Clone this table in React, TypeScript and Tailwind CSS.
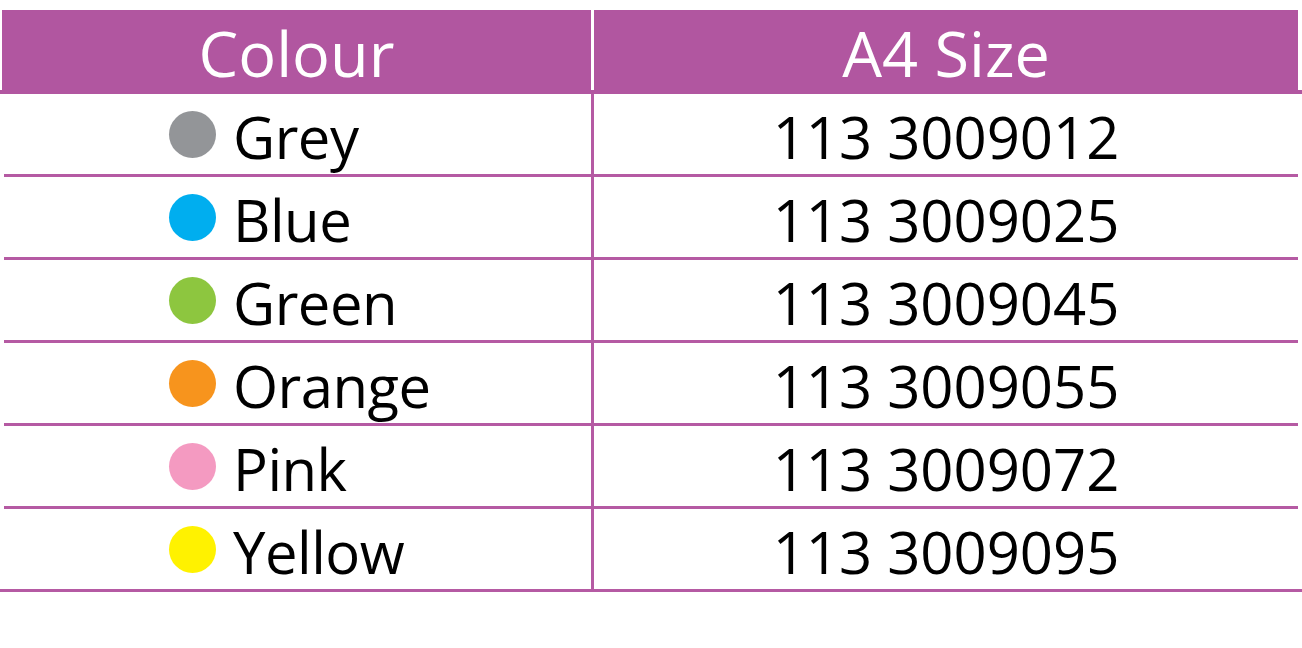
const rows = [
  { name: "Grey", dot: "bg-[#939598]", code: "113 3009012" },
  { name: "Blue", dot: "bg-[#00aeef]", code: "113 3009025" },
  { name: "Green", dot: "bg-[#8dc63f]", code: "113 3009045" },
  { name: "Orange", dot: "bg-[#f7941d]", code: "113 3009055" },
  { name: "Pink", dot: "bg-[#f49ac1]", code: "113 3009072" },
  { name: "Yellow", dot: "bg-[#fff200]", code: "113 3009095" },
];

const App = () => {
  return (
    <div
      className="w-[1302px] h-[648px] bg-white pt-[10px]"
      style={{ fontFamily: '"Open Sans", "Noto Sans", sans-serif' }}
    >
      {/* header */}
      <div className="flex ml-[2px] mr-[4px] h-[80px] text-white text-[63px] leading-none">
        <div className="w-[589px] bg-[#b156a0] flex items-center justify-center pt-[4px]">
          Colour
        </div>
        <div className="w-[3px] bg-white" />
        <div className="flex-1 bg-[#b156a0] flex items-center justify-center pt-[4px]">
          A4 Size
        </div>
      </div>
      <div className="h-[4px] bg-[#b156a0]" />

      {/* rows */}
      {rows.map((r, i) => {
        const last = i === rows.length - 1;
        return (
          <div key={r.name}>
            <div
              className={`flex mx-[4px] ${
                last ? "h-[80px]" : "h-[83px] border-b-[3px] border-[#b55aa3]"
              }`}
            >
              <div className="w-[587px] flex items-center gap-[17px] pl-[165px]">
                <span className={`w-[47px] h-[47px] rounded-full ${r.dot}`} />
                <span className="text-[58px] leading-none text-black tracking-[-0.5px] pt-[6px]">
                  {r.name}
                </span>
              </div>
              <div className="w-[3px] bg-[#b55aa3]" />
              <div className="flex-1 flex items-center justify-center text-[58px] leading-none text-black pt-[6px]">
                {r.code}
              </div>
            </div>
            {last && <div className="h-[3px] bg-[#b55aa3]" />}
          </div>
        );
      })}
    </div>
  );
};

export default App;
